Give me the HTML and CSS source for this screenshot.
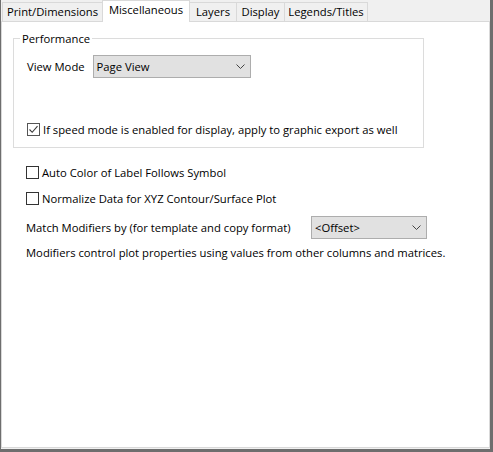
FILE: index.html
```html
<!DOCTYPE html>
<html>
<head>
<meta charset="utf-8">
<link rel="stylesheet" href="styles.css">
</head>
<body>
<div class="window">
  <div class="tabs">
    <div class="tab tab-print">Print/Dimensions</div>
    <div class="tab tab-active">Miscellaneous</div>
    <div class="tab tab-layers">Layers</div>
    <div class="tab tab-display">Display</div>
    <div class="tab tab-legends">Legends/Titles</div>
  </div>
  <div class="panel">
    <fieldset class="group">
      <legend class="legend">Performance</legend>
      <div class="view-row">
        <span class="label">View Mode</span>
        <div class="combo combo-view">
          <span class="combo-text">Page View</span>
          <svg class="chev" width="9" height="5" viewBox="0 0 9 5"><path d="M0.5 0.5 L4.5 4.5 L8.5 0.5" fill="none" stroke="#444" stroke-width="1"/></svg>
        </div>
      </div>
      <div class="check-row speed-row">
        <span class="box box-checked">
          <svg width="11" height="11" viewBox="0 0 11 11"><path d="M1.5 5.5 L4.2 8.3 L9.5 2.2" fill="none" stroke="#3a3a3a" stroke-width="1.1"/></svg>
        </span>
        <span class="check-text">If speed mode is enabled for display, apply to graphic export as well</span>
      </div>
    </fieldset>
    <div class="check-row auto-row">
      <span class="box"></span>
      <span class="check-text">Auto Color of Label Follows Symbol</span>
    </div>
    <div class="check-row norm-row">
      <span class="box"></span>
      <span class="check-text">Normalize Data for XYZ Contour/Surface Plot</span>
    </div>
    <div class="match-row">
      <span class="label match-label">Match Modifiers by (for template and copy format)</span>
      <div class="combo combo-offset">
        <span class="combo-text">&lt;Offset&gt;</span>
        <svg class="chev" width="9" height="5" viewBox="0 0 9 5"><path d="M0.5 0.5 L4.5 4.5 L8.5 0.5" fill="none" stroke="#444" stroke-width="1"/></svg>
      </div>
    </div>
    <div class="note">Modifiers control plot properties using values from other columns and matrices.</div>
  </div>
</div>
</body>
</html>
```
FILE: styles.css
```css
html, body {
  margin: 0;
  padding: 0;
  width: 493px;
  height: 452px;
  overflow: hidden;
  background: #f0f0f0;
}
.window {
  box-sizing: border-box;
  width: 493px;
  height: 452px;
  border-left: 1px solid #6e6e6e;
  border-right: 3px solid #6e6e6e;
  border-bottom: 3px solid #6e6e6e;
  background: #f0f0f0;
  display: flex;
  flex-direction: column;
  font-family: "Open Sans", "Noto Sans", sans-serif;
  font-size: 11.25px;
  color: #000;
}
.tabs {
  display: flex;
  align-items: flex-end;
  height: 21px;
  padding-left: 1px;
  position: relative;
  z-index: 1;
}
.tab {
  box-sizing: border-box;
  height: 19px;
  border: 1px solid #d9d9d9;
  border-bottom: none;
  background: #f0f0f0;
  display: flex;
  align-items: center;
  justify-content: center;
  line-height: 1;
}
.tab + .tab { margin-left: -1px; }
.tab-print { width: 101px; }
.tab-active {
  width: 88px;
  height: 22px;
  margin-bottom: -1px;
  background: #fff;
  padding-bottom: 3px;
}
.tab-layers { width: 48px; }
.tab-display { width: 49px; }
.tab-legends { width: 84px; }
.panel {
  flex: 1;
  box-sizing: border-box;
  background: #fff;
  border: 1px solid #d9d9d9;
  margin-bottom: 1px;
  padding: 9px 0 0 11px;
}
.group {
  box-sizing: border-box;
  width: 411px;
  height: 117px;
  margin: 0;
  padding: 0 0 0 13px;
  border: 1px solid #dcdcdc;
}
.legend {
  padding: 0 2px;
  margin-left: -7px;
  line-height: 15px;
}
.view-row {
  display: flex;
  align-items: center;
  margin-top: 9px;
}
.label { white-space: nowrap; }
.combo {
  box-sizing: border-box;
  height: 23px;
  background: #e1e1e1;
  border: 1px solid #adadad;
  display: flex;
  align-items: center;
  justify-content: space-between;
  padding: 0 5px 0 3px;
}
.combo-view {
  width: 158px;
  margin-left: 8px;
}
.check-row {
  display: flex;
  align-items: center;
  height: 16px;
}
.speed-row { margin-top: 43px; }
.box {
  box-sizing: border-box;
  width: 13px;
  height: 13px;
  border: 1px solid #333;
  background: #fff;
  margin-right: 3px;
  display: flex;
  align-items: center;
  justify-content: center;
}
.box-checked { border-color: #555; }
.check-text { white-space: nowrap; }
.auto-row { margin-top: 16px; margin-left: 13px; }
.norm-row { margin-top: 10px; margin-left: 13px; }
.match-row {
  display: flex;
  align-items: center;
  margin-top: 10px;
  margin-left: 13px;
}
.match-label { width: 285px; }
.combo-offset { width: 116px; }
.note {
  margin-top: 6px;
  margin-left: 13px;
  white-space: nowrap;
}
```
